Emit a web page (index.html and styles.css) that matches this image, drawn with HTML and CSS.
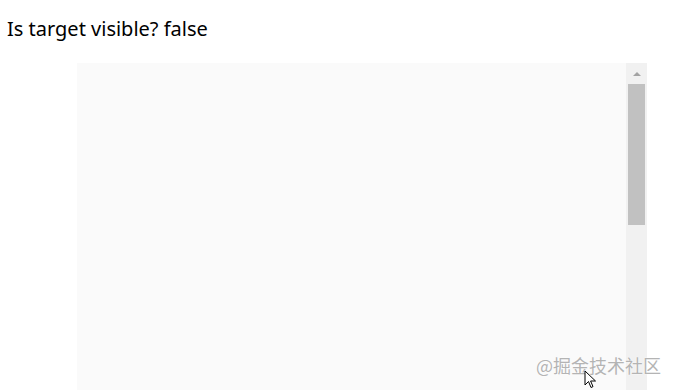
FILE: index.html
```html
<!DOCTYPE html>
<html lang="en">
<head>
<meta charset="utf-8">
<title>Intersection demo</title>
<link rel="stylesheet" href="styles.css">
</head>
<body>
<p class="status">Is target visible? false</p>
<div class="scroller">
  <div class="scroll-content"></div>
  <div class="scrollbar">
    <div class="arrow"></div>
    <div class="thumb"></div>
  </div>
</div>
<div class="watermark">@掘金技术社区</div>
<svg class="cursor" width="13" height="20" viewBox="0 0 13 20"><path d="M1 1 L1 15 L4.5 11.5 L7 17.5 L9 16.6 L6.6 11 L11.5 11 Z" fill="#fff" stroke="#000" stroke-width="1" stroke-linejoin="miter"/></svg>
</body>
</html>
```
FILE: styles.css
```css
html, body {
  margin: 0;
  padding: 0;
  background: #fff;
  overflow: hidden;
  height: 390px;
}
body {
  font-family: "Segoe UI", "Noto Sans", "Open Sans", sans-serif;
  color: #000;
  position: relative;
}
.status {
  margin: 0;
  padding: 17px 0 0 7px;
  font-size: 20px;
  line-height: 24px;
  height: 46px;
  box-sizing: border-box;
  height: 63px;
}
.scroller {
  margin-left: 77px;
  width: 570px;
  height: 327px;
  display: flex;
  background: #fafafa;
}
.scroll-content {
  flex: 1;
}
.scrollbar {
  width: 21px;
  background: #f1f1f1;
  display: flex;
  flex-direction: column;
  align-items: center;
}
.arrow {
  margin-top: 9px;
  width: 0;
  height: 0;
  border-left: 4px solid transparent;
  border-right: 4px solid transparent;
  border-bottom: 4px solid #a3a3a3;
}
.thumb {
  margin-top: 8px;
  width: 17px;
  height: 141px;
  background: #c1c1c1;
}
.watermark {
  position: absolute;
  left: 536px;
  top: 353px;
  font-family: "Noto Sans CJK SC", sans-serif;
  font-size: 18px;
  line-height: 24px;
  color: #b4b4b4;
  text-shadow: 0 0 2px #fff, 0 0 1px #fff;
}
.cursor {
  position: absolute;
  left: 584px;
  top: 370px;
}
```
